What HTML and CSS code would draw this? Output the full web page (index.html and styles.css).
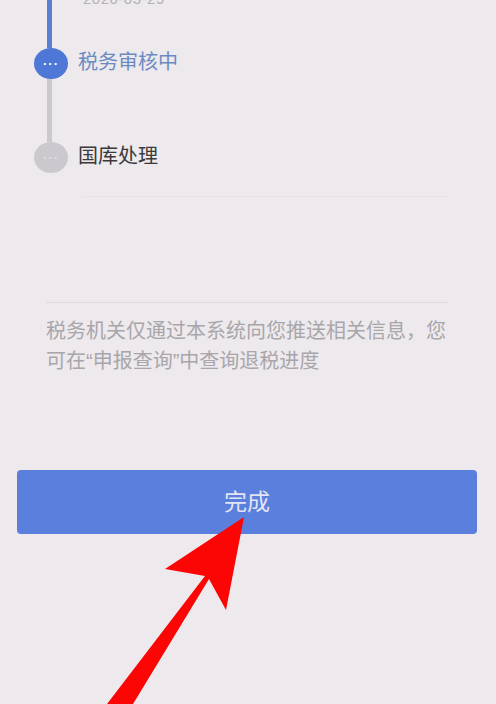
FILE: index.html
```html
<!DOCTYPE html>
<html lang="zh-CN">
<head>
  <meta charset="UTF-8">
  <meta name="viewport" content="width=device-width, initial-scale=1.0">
  <title>退税进度</title>
  <link rel="stylesheet" href="styles.css">
</head>
<body>

<div class="page">
  <div class="timeline">
    <div class="step step-first">
      <div class="rail">
        <div class="line line-blue"></div>
      </div>
      <div class="step-date">2020-03-29</div>
    </div>

    <div class="step step-active">
      <div class="rail">
        <div class="dot dot-blue">···</div>
        <div class="line line-grey"></div>
      </div>
      <div class="step-label blue">税务审核中</div>
    </div>

    <div class="step step-last">
      <div class="rail">
        <div class="dot dot-grey">···</div>
      </div>
      <div class="step-label">国库处理</div>
    </div>
  </div>

  <div class="divider divider-short"></div>

  <div class="notice">
    <p>税务机关仅通过本系统向您推送相关信息，您可在“申报查询”中查询退税进度</p>
  </div>

  <button class="done-btn">完成</button>
</div>

<svg class="arrow" viewBox="0 0 496 704" width="496" height="704">
  <polygon points="244,517 165,569 205,576 107,704 133,704 209,579 226,610" fill="#fb0505"/>
</svg>

</body>
</html>
```

FILE: styles.css
```css
html, body {
  margin: 0;
  height: 100%;
}

body {
  background-color: #ede9ed;
  font-family: "Liberation Sans", "Noto Sans CJK SC", sans-serif;
  overflow: hidden;
  position: relative;
}

.page {
  display: flex;
  flex-direction: column;
  height: 704px;
}

.timeline {
  display: flex;
  flex-direction: column;
  padding-left: 34px;
}

.step {
  display: flex;
  gap: 10px;
}

.rail {
  width: 34px;
  display: flex;
  flex-direction: column;
  align-items: center;
  flex-shrink: 0;
}

.step-first {
  height: 48px;
}

.step-active {
  height: 94px;
}

.step-last {
  height: 31px;
}

.line {
  width: 5px;
  flex: 1;
  margin-right: 4px;
}

.line-blue {
  background-color: #5a7fd2;
}

.line-grey {
  background-color: #cbc9cd;
}

.dot {
  width: 34px;
  height: 31px;
  border-radius: 50%;
  flex-shrink: 0;
  display: flex;
  justify-content: center;
  align-items: center;
  color: #fff;
  font-size: 13px;
  font-weight: bold;
  letter-spacing: 1px;
}

.dot-blue {
  background-color: #4f77d5;
}

.dot-grey {
  background-color: #cbc9cd;
  color: #e0dee1;
}

.step-date {
  margin-top: -9px;
  margin-left: 5px;
  height: 16px;
  font-size: 15px;
  line-height: 16px;
  color: #b3b1b5;
  letter-spacing: 0.5px;
}

.step-label {
  margin-top: -1px;
  font-size: 20px;
  line-height: 30px;
  color: #3a393c;
}

.step-label.blue {
  color: #6c8ac2;
}

.divider {
  height: 1px;
  background-color: #e6e3e7;
}

.divider-short {
  margin: 23px 48px 0 82px;
}

.notice {
  margin: 105px 48px 0 46px;
  border-top: 1px solid #dedbdf;
  padding-top: 13px;
}

.notice p {
  margin: 0;
  font-size: 20px;
  line-height: 30px;
  color: #a8a6aa;
}

.done-btn {
  display: block;
  margin: 94px 19px 0 17px;
  height: 64px;
  border: none;
  border-radius: 4px;
  background-color: #5a7fdc;
  color: #e3e6f2;
  font-family: inherit;
  font-size: 23px;
  padding: 0 0 4px;
}

.arrow {
  position: absolute;
  left: 0;
  top: 0;
  pointer-events: none;
}
```
